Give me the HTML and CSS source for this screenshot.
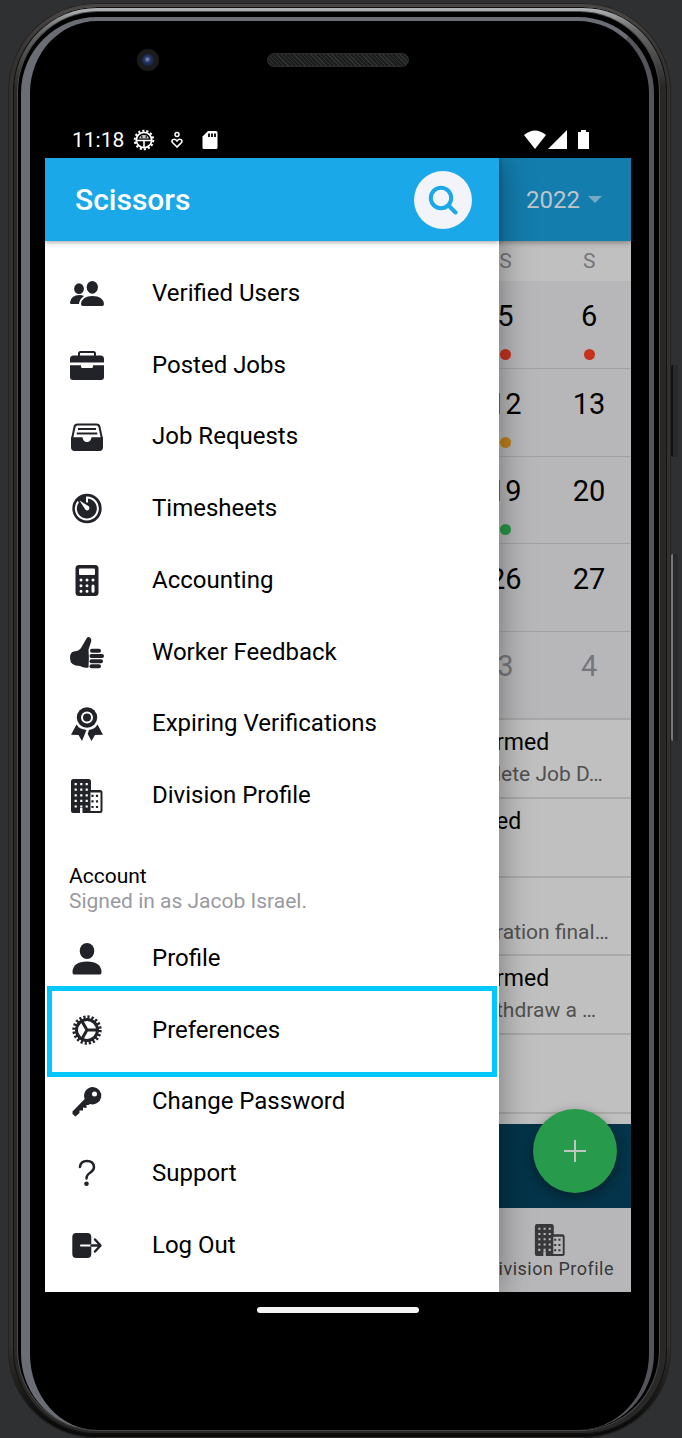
FILE: index.html
```html
<!DOCTYPE html>
<html lang="en">
<head>
    <meta charset="UTF-8">
    <meta name="viewport" content="width=device-width, initial-scale=1.0">
    <title>Scissors</title>
    <link rel="stylesheet" href="styles.css">
</head>
<body>
    <svg class="symbols" aria-hidden="true">
        <symbol id="building" viewBox="0 0 36 36">
            <path fill="currentColor" fill-rule="evenodd" d="M4.500 2H19.500Q22 2 22 4.500V13H31Q33.500 13 33.500 15.500V34Q33.500 36 31.500 36H13.500V31H11V36H4Q2 36 2 34V4.500Q2 2 4.500 2ZM21.500 15.500V34H31.500V15.500Z"/>
            <path class="windows" d="M6.700 6V32M12.300 6V31M17.700 6V32"/>
            <path class="panes" d="M23.500 17.700V32M28 17.700V32"/>
        </symbol>
    </svg>

    <div class="phone">
        <span class="side-button power"></span>
        <span class="side-button volume"></span>
        <div class="rim">
            <div class="groove">
            <div class="glass">
                <div class="top-bezel">
                    <span class="camera"></span>
                    <span class="speaker"></span>
                </div>

                <!-- Status bar -->
                <div class="status-bar">
                    <span class="clock">11:18</span>
                    <svg class="status-icon" viewBox="0 0 22 22">
                        <circle cx="11" cy="11" r="9.300" fill="none" stroke="#fff" stroke-width="2" stroke-dasharray="2.200 1.973"/>
                        <circle cx="11" cy="11" r="7.700" fill="none" stroke="#fff" stroke-width="1.800"/>
                        <path d="M4 11.500H18M11 11.500V18" stroke="#fff" stroke-width="1.600"/>
                        <path d="M6 9.500Q7 6 11 6T16 9.500Z" fill="#ccc"/>
                        <path d="M8 8h1.500M12.500 8h1.500" stroke="#000" stroke-width="1.500"/>
                    </svg>
                    <svg class="status-icon" viewBox="0 0 22 22">
                        <circle cx="11" cy="5.500" r="2" fill="none" stroke="#fff" stroke-width="1.500"/>
                        <path d="M11 18L6.500 13.500Q5.300 11.800 7 10.600Q9 9.500 11 12Q13 9.500 15 10.600Q16.700 11.800 15.500 13.500Z" fill="none" stroke="#fff" stroke-width="1.600"/>
                    </svg>
                    <svg class="status-icon" viewBox="0 0 22 22">
                        <path d="M9 2H17Q18.500 2 18.500 3.500V18.500Q18.500 20 17 20H5Q3.500 20 3.500 18.500V7.500Z" fill="#fff"/>
                        <path d="M10 4.500V8M13 4.500V8M16 4.500V8" stroke="#000" stroke-width="1.800"/>
                    </svg>
                    <svg class="signals" viewBox="0 0 66 20">
                        <path d="M0 5Q11 -4 22 5L11 19Z" fill="#fff"/>
                        <path d="M24 19L43 0V19Z" fill="#fff"/>
                        <path d="M57 0H62V2H65V19H54V2H57Z" fill="#fff"/>
                    </svg>
                </div>

                <div class="screen">
                    <!-- Calendar page behind the drawer -->
                    <main class="calendar-page">
                        <header class="page-header">
                            <button class="year">2022 <span class="caret"></span></button>
                        </header>
                        <table class="calendar">
                            <thead>
                                <tr><td colspan="5"></td><th>S</th><th>S</th></tr>
                            </thead>
                            <tbody>
                                <tr><td colspan="5"></td><td>5<i class="dot red"></i></td><td>6<i class="dot red"></i></td></tr>
                                <tr><td colspan="5"></td><td>12<i class="dot orange"></i></td><td>13<i class="dot"></i></td></tr>
                                <tr><td colspan="5"></td><td>19<i class="dot green"></i></td><td>20<i class="dot"></i></td></tr>
                                <tr><td colspan="5"></td><td>26<i class="dot"></i></td><td>27<i class="dot"></i></td></tr>
                                <tr class="next-month"><td colspan="5"></td><td>3<i class="dot"></i></td><td>4<i class="dot"></i></td></tr>
                            </tbody>
                        </table>
                        <ul class="events">
                            <li><h3>rmed</h3><p>lete Job D…</p></li>
                            <li><h3>ed</h3><p></p></li>
                            <li><h3></h3><p>ration final…</p></li>
                            <li><h3>rmed</h3><p>thdraw a …</p></li>
                            <li><h3></h3><p></p></li>
                        </ul>
                        <div class="banner"></div>
                        <nav class="tabs">
                            <a class="tab" href="#">
                                <svg class="tab-icon"><use href="#building"/></svg>
                                Division Profile
                            </a>
                        </nav>
                        <button class="fab" aria-label="Add">
                            <svg viewBox="0 0 24 24"><path d="M12 1V23M1 12H23" stroke="#bfc5c1" stroke-width="2"/></svg>
                        </button>
                    </main>

                    <!-- Side menu -->
                    <aside class="drawer">
                        <header class="drawer-header">
                            <h1>Scissors</h1>
                            <button class="search" aria-label="Search">
                                <svg viewBox="0 0 30 30"><circle cx="13" cy="13" r="10.200"/><path d="M20.500 20.500L27.500 27.500"/></svg>
                            </button>
                        </header>

                        <ul class="menu main-menu">
                            <li><a href="#">
                                <svg class="icon" viewBox="0 0 36 36">
                                    <ellipse cx="10" cy="13.700" rx="4.900" ry="5.400"/>
                                    <path d="M1 27.500Q2 20 10.500 20Q13 20 15 21Q10.500 24 10 29H2.300Q1 29 1 27.500Z"/>
                                    <ellipse cx="23.300" cy="12.300" rx="5.600" ry="6.400"/>
                                    <path d="M12 29Q13 21 23.500 21T35 29Q35 31 33 31H14Q12 31 12 29Z"/>
                                </svg>
                                Verified Users</a></li>
                            <li><a href="#">
                                <svg class="icon" viewBox="0 0 36 36">
                                    <path d="M10 9V6.500Q10 5 11.500 5H24.500Q26 5 26 6.500V9" class="line"/>
                                    <path d="M1 15.500V12Q1 8.500 4.500 8.500H31.500Q35 8.500 35 12V15.500Z"/>
                                    <path d="M1 18.300H12V19.500Q12 21 13.500 21H22.500Q24 21 24 19.500V18.300H35V30Q35 33 32 33H4Q1 33 1 30Z"/>
                                </svg>
                                Posted Jobs</a></li>
                            <li><a href="#">
                                <svg class="icon" viewBox="0 0 36 36">
                                    <path d="M3 21L5.500 9Q6 6.500 8.500 6.500H27.500Q30 6.500 30.500 9L33 21" class="line"/>
                                    <path d="M9 11H27M7.700 15.500H28.300" class="line"/>
                                    <path d="M2 19.300H13.500Q14 24 18 24T22.500 19.300H34V29Q34 33 30.500 33H5.500Q2 33 2 29Z"/>
                                </svg>
                                Job Requests</a></li>
                            <li><a href="#">
                                <svg class="icon" viewBox="0 0 36 36">
                                    <circle cx="18" cy="18.500" r="14.700"/>
                                    <path d="M18 12.500V7.500A11 11 0 1 1 9.200 11.700" class="cut thin"/>
                                    <path d="M10.500 10.500L20 16.500Q21 18.500 19.500 20Q17.500 21 16.300 19.500Z" class="paper"/>
                                </svg>
                                Timesheets</a></li>
                            <li><a href="#">
                                <svg class="icon" viewBox="0 0 36 36">
                                    <rect x="6.500" y="3" width="23" height="31" rx="3.500"/>
                                    <rect x="10" y="6.500" width="16" height="6.500" rx="1" class="paper"/>
                                    <path d="M12 18H12M18 18H18M24 18H24M12 23.700H12M18 23.700H18M12 29.300H12M18 29.300H18M24 24V29.300" class="cut round"/>
                                </svg>
                                Accounting</a></li>
                            <li><a href="#">
                                <svg class="icon" viewBox="0 0 36 36">
                                    <path d="M1 24Q1 18 5 17.500Q10 17 12 14L17.500 4.500Q19 2 21.500 4Q23 5.500 22 8L19.500 15.500Q20.300 24 19.500 33.500Q15 34.500 11 32Q1 32 1 24Z"/>
                                    <rect x="21" y="14.800" width="11" height="4" rx="2"/>
                                    <rect x="20.500" y="20" width="14.500" height="4" rx="2"/>
                                    <rect x="20.500" y="25.200" width="13.500" height="4" rx="2"/>
                                    <rect x="20.500" y="30.300" width="11.500" height="4" rx="2"/>
                                </svg>
                                Worker Feedback</a></li>
                            <li><a href="#">
                                <svg class="icon" viewBox="0 0 36 36">
                                    <path d="M7.500 19.500Q10 24 17.500 25L13 36L9.500 30L2 29.800ZM28.500 19.500Q26 24 20 25L18.700 29L22.500 36L26 30L34 29.800Z"/>
                                    <circle cx="18" cy="12.500" r="10.200"/>
                                    <circle cx="18" cy="12.500" r="5" class="cut thin"/>
                                </svg>
                                Expiring Verifications</a></li>
                            <li><a href="#">
                                <svg class="icon"><use href="#building"/></svg>
                                Division Profile</a></li>
                        </ul>

                        <div class="account">
                            <h2>Account</h2>
                            <p>Signed in as Jacob Israel.</p>
                        </div>

                        <ul class="menu account-menu">
                            <li><a href="#">
                                <svg class="icon" viewBox="0 0 36 36">
                                    <ellipse cx="18" cy="11" rx="7.300" ry="8"/>
                                    <path d="M3.500 32Q4 21.500 18 21.500T32.500 32Q32.500 34.500 31 34.500H5Q3.500 34.500 3.500 32Z"/>
                                </svg>
                                Profile</a></li>
                            <li class="highlight"><a href="#">
                                <svg class="icon" viewBox="0 0 36 36">
                                    <circle cx="18" cy="18" r="13" fill="none" stroke="currentColor" stroke-width="3.400" stroke-dasharray="2.200 1.884"/>
                                    <circle cx="18" cy="18" r="10.500" class="ring"/>
                                    <path d="M18 18H28M18 18L13 9.300M18 18L13 26.700" class="ring"/>
                                </svg>
                                Preferences</a></li>
                            <li><a href="#">
                                <svg class="icon" viewBox="0 0 36 36">
                                    <path fill-rule="evenodd" d="M24 4A8.700 8.700 0 1 1 21 21L19.500 22L17.500 22V25L14 24.500V27.500L10.500 27.500V30L6.500 33.500L3.500 31V28.500L15.700 16A8.700 8.700 0 0 1 24 4ZM25.500 8.500A2.500 2.500 0 1 0 25.500 13.500A2.500 2.500 0 1 0 25.500 8.500Z"/>
                                </svg>
                                Change Password</a></li>
                            <li><a href="#">
                                <svg class="icon" viewBox="0 0 36 36">
                                    <path d="M11 12Q11.500 6 18 6T25 12Q25 15 21.500 17.500Q17.500 20 17.500 23.500" class="line bold round"/>
                                    <circle cx="17.500" cy="28.800" r="2.300"/>
                                </svg>
                                Support</a></li>
                            <li><a href="#">
                                <svg class="icon" viewBox="0 0 36 36">
                                    <rect x="3.300" y="6" width="19" height="25" rx="4"/>
                                    <path d="M12 18.500H22.500" class="cut thin round"/>
                                    <path d="M22.500 18.500H31M26 12.500L31.500 18.500L26 24.500" class="line bold round"/>
                                </svg>
                                Log Out</a></li>
                        </ul>
                    </aside>
                </div>

                <div class="home-area"><span class="home-bar"></span></div>
            </div>
            </div>
        </div>
    </div>
</body>
</html>
```
FILE: styles.css
```css
* {
    box-sizing: border-box;
}
body {
    margin: 0;
    background: #2f3032;
    font-family: Roboto, sans-serif;
    color: #000;
}
h1, h2, h3, p, ul {
    margin: 0;
    padding: 0;
    font-weight: 400;
}
ul {
    list-style: none;
}
a {
    color: inherit;
    text-decoration: none;
}
button {
    padding: 0;
    border: none;
    font-family: inherit;
}
.symbols {
    display: block;
    width: 0;
    height: 0;
}

/* Phone body, from the outer case to the glass */
.phone {
    position: relative;
    margin: 3px 11px 0 8px;
    padding: 4px 4px 4px 5px;
    border-radius: 88px;
    background: linear-gradient(#4a4746, #343130 60px, #343130 1340px, #0b0b0b 1420px);
    box-shadow: inset 0 0 0 1px #242322;
}
.rim {
    padding: 5px 8px 4px 5px;
    border-radius: 84px;
    background: linear-gradient(#b4b7b9, #a2a4a6 6px, #6b6c6d 22px, #292827 80px);
    box-shadow: inset 0 0 0 1px #111;
}
.groove {
    padding: 5px 5px 0 3px;
    border-radius: 80px;
    background: #000;
    box-shadow: 0 0 0 1px #4a4a4a;
}
.glass {
    padding: 0 18px 0 15px;
    border: solid #6a6d74;
    border-width: 4px 5px 0 9px;
    border-right-color: #55545b;
    border-radius: 76px;
    background: #000;
}
.side-button {
    position: absolute;
    right: -7px;
    width: 7px;
    border-left: 2px solid #111;
    border-radius: 2px;
    background: #292929;
}
.power {
    top: 362px;
    height: 92px;
}
.volume {
    top: 551px;
    height: 187px;
    border-left-color: #777;
}
.top-bezel {
    display: grid;
    grid-template-columns: 1fr 142px 1fr;
    align-items: center;
    height: 101px;
    padding-bottom: 23px;
}
.camera {
    width: 22px;
    height: 22px;
    margin-left: 92px;
    border: 5px solid #1b1b1c;
    border-radius: 50%;
    background: radial-gradient(circle at 45% 45%, #8795b8, #24345f 35%, #10172e);
}
.speaker {
    grid-column: 2;
    height: 14px;
    border: 1px solid #2b2c2c;
    border-radius: 7px;
    background: repeating-linear-gradient(45deg, #1c1d1d 0 2px, #303131 2px 3px);
}

/* Status bar */
.status-bar {
    display: flex;
    align-items: center;
    height: 36px;
    padding: 0 41px 0 27px;
    color: #fff;
}
.clock {
    font-size: 21px;
    margin-right: 9px;
}
.status-icon {
    width: 22px;
    height: 22px;
    margin-right: 11px;
}
.signals {
    width: 66px;
    height: 20px;
    margin-left: auto;
}

/* Both layers share the same grid cell */
.screen {
    display: grid;
    overflow: hidden;
    background: #c0c0c0;
}
.calendar-page, .drawer {
    grid-area: 1 / 1;
}
.calendar-page {
    position: relative;
    display: flex;
    flex-direction: column;
}
.page-header {
    position: relative;
    display: flex;
    justify-content: flex-end;
    align-items: center;
    height: 83px;
    padding-right: 29px;
    background: #137dae;
    box-shadow: 0 1px 6px rgba(0, 0, 0, 0.4);
}
.year {
    display: flex;
    align-items: center;
    gap: 8px;
    background: none;
    color: #bfc5c9;
    font-size: 24px;
}
.caret {
    border: 7px solid transparent;
    border-top-color: #76a9c2;
    border-bottom: none;
}
.calendar {
    width: 100%;
    table-layout: fixed;
    border-collapse: collapse;
    text-align: center;
}
.calendar td, .calendar th {
    padding: 0;
}
.calendar th {
    height: 40px;
    color: #76767b;
    font-size: 21px;
    font-weight: 400;
}
.calendar tbody {
    height: 438px;
    background: #b7b7b9;
    font-size: 29px;
    line-height: 32px;
}
.calendar tbody td {
    padding-top: 11px;
}
.calendar tbody tr {
    height: 20%;
    border-bottom: 1px solid #a2a2a5;
}
.calendar .next-month {
    color: #76767c;
    border-bottom: 2px solid #a7a7a9;
}
.dot {
    display: block;
    width: 11px;
    height: 11px;
    margin: 17px auto 0;
    border-radius: 50%;
}
.red {
    background: #c5331f;
}
.orange {
    background: #bf8119;
}
.green {
    background: #269747;
}
.events {
    display: grid;
    grid-auto-rows: 1fr;
    height: 394px;
}
.events li {
    display: grid;
    grid-template-rows: 32px 24px;
    align-content: start;
    padding: 8px 0 0 calc(100% - 135px);
    border-bottom: 2px solid #aaa;
}
.events h3 {
    font-size: 23px;
    line-height: 30px;
}
.events p {
    color: #515151;
    font-size: 21px;
    line-height: 28px;
    white-space: nowrap;
}
.banner {
    height: 84px;
    margin-top: auto;
    background: #043449;
}
.tabs {
    display: flex;
    justify-content: flex-end;
    height: 84px;
    padding-right: 17px;
    background: #b7b7b9;
}
.tab {
    display: flex;
    flex-direction: column;
    align-items: center;
    padding-top: 14px;
    color: #38383a;
    font-size: 18px;
    line-height: 26px;
    letter-spacing: 0.5px;
}
.tab-icon {
    width: 34px;
    height: 34px;
    --gap: #b7b7b9;
}
.fab {
    position: absolute;
    right: 14px;
    bottom: 99px;
    width: 84px;
    height: 84px;
    border-radius: 50%;
    background: #279b4b;
    box-shadow: 0 4px 12px rgba(0, 0, 0, 0.4);
}
.fab svg {
    display: block;
    width: 24px;
    height: 24px;
    margin: auto;
}

/* Drawer */
.drawer {
    position: relative;
    width: calc(100% - 132px);
    padding-bottom: 11px;
    background: #fff;
    box-shadow: 0 0 32px rgba(0, 0, 0, 0.4);
}
.drawer-header {
    display: flex;
    justify-content: space-between;
    align-items: center;
    height: 83px;
    padding: 0 27px 0 30px;
    background: #1ba8e8;
    box-shadow: 0 1px 5px rgba(0, 0, 0, 0.4);
}
.drawer-header h1 {
    color: #fff;
    font-size: 30px;
    font-weight: 500;
}
.search {
    width: 58px;
    height: 58px;
    border-radius: 50%;
    background: #f3f4f9;
}
.search svg {
    display: block;
    width: 30px;
    height: 30px;
    margin: auto;
    fill: none;
    stroke: #1ba8e8;
    stroke-width: 4;
    stroke-linecap: round;
}
.menu {
    display: grid;
    grid-auto-rows: 1fr;
}
.main-menu {
    height: 574px;
    margin-top: 16px;
}
.account-menu {
    height: 359px;
}
.menu li {
    display: grid;
}
.menu a {
    display: flex;
    align-items: center;
    gap: 47px;
    padding-left: 24px;
    font-size: 24px;
}
.icon {
    width: 36px;
    height: 36px;
    color: #222328;
    fill: currentColor;
    --gap: #fff;
}
.line, .ring {
    fill: none;
    stroke: #222328;
    stroke-width: 2;
}
.bold {
    stroke-width: 2.5;
}
.ring {
    stroke-width: 3;
}
.cut {
    fill: none;
    stroke: #fff;
    stroke-width: 3;
}
.thin {
    stroke-width: 2;
}
.round {
    stroke-linecap: round;
    stroke-linejoin: round;
}
.paper {
    fill: #fff;
}
.windows, .panes {
    fill: none;
    stroke: var(--gap);
    stroke-width: 2.2;
    stroke-dasharray: 2.2 3.4;
}
.panes {
    stroke: currentColor;
}
.account {
    height: 91px;
    padding: 33px 24px 0;
    font-size: 21px;
    line-height: 25px;
}
.account h2 {
    font-size: 21px;
}
.account p {
    color: #999aa1;
}
.highlight {
    position: relative;
}
.highlight::after {
    content: "";
    position: absolute;
    inset: -8px 2px -11px;
    border: 5px solid #00c8ff;
    pointer-events: none;
}

.home-area {
    height: 138px;
    padding-top: 15px;
}
.home-bar {
    display: block;
    width: 162px;
    height: 6px;
    margin: 0 auto;
    border-radius: 3px;
    background: #f4f4f4;
}
```
